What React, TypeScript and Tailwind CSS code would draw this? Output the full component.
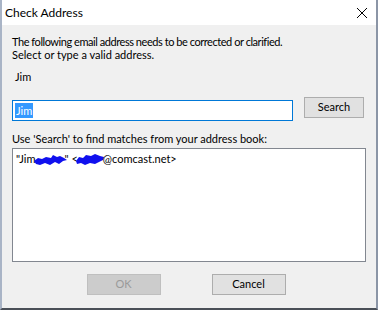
import React from 'react';

const Scribble: React.FC<{ w: number; d: string; className?: string }> = ({ w, d, className }) => (
  <svg width={w} height={14} viewBox={`0 0 ${w} 14`} className={`inline-block ${className ?? ''}`}>
    <path d={d} fill="#1010ee" />
  </svg>
);

const App: React.FC = () => {
  return (
    <div
      className="w-[378px] h-[310px] flex flex-col bg-[#f0f0f0] border-l-2 border-r-2 border-b-2 border-l-[#a9b4c6] border-r-[#8b95a6] border-b-[#4a4f57] text-[11px] text-black overflow-hidden"
      style={{ fontFamily: 'Lato, "Open Sans", sans-serif' }}
    >
      <div className="h-[25px] bg-white flex items-center justify-between pl-[3px] pr-[8px] shrink-0">
        <span className="text-[12px]">Check Address</span>
        <svg width="12" height="12" viewBox="0 0 12 12">
          <path d="M1 1 L11 11 M11 1 L1 11" stroke="#000" strokeWidth="1" />
        </svg>
      </div>

      <div className="flex flex-col pl-[10px] pr-[10px] pt-[10px]">
        <p className="leading-[13px] tracking-[-0.45px]">The following email address needs to be corrected or clarified.</p>
        <p className="leading-[13px]">Select or type a valid address.</p>
        <p className="pl-[3px] mt-[9px] leading-[13px]">Jim</p>

        <div className="flex items-start mt-[17px]">
          <div className="w-[281px] h-[21px] bg-white border border-[#0078d7] flex items-center pl-[2px]">
            <span className="bg-[#3399ff] text-white leading-[15px] px-[1px]">Jim</span>
          </div>
          <button className="ml-[11px] -mt-[3px] w-[60px] h-[21px] bg-[#e1e1e1] border border-[#adadad] flex items-center justify-center">
            Search
          </button>
        </div>

        <p className="mt-[11px] leading-[14px]">Use 'Search' to find matches from your address book:</p>

        <div className="mt-[2px] w-[354px] h-[114px] bg-white border border-[#828790] pl-[3px] pt-[2px]">
          <div className="flex items-center leading-[15px] whitespace-nowrap">
            <span>"Jim</span>
            <Scribble
              w={34}
              className="-ml-[3px] -mr-[2px]"
              d="M1 9 L5 6 L9 7 L13 5 L18 6 L20 3 L24 5 L27 4 L31 6 L34 8 L30 9 L26 12 L22 10 L17 13 L12 11 L7 13 L3 12 Z"
            />
            <span>" &lt;</span>
            <Scribble
              w={28}
              className="-ml-[2px] -mr-[1px]"
              d="M0 9 L3 5 L7 6 L10 3 L15 4 L19 2 L24 4 L28 5 L27 8 L23 10 L19 12 L14 11 L9 13 L5 11 L1 12 Z"
            />
            <span>@comcast.net&gt;</span>
          </div>
        </div>

        <div className="flex justify-center gap-[51px] mt-[12px] pr-[6px]">
          <button className="w-[74px] h-[21px] bg-[#cccccc] border border-[#bfbfbf] text-[#9a9a9a] flex items-center justify-center" disabled>
            OK
          </button>
          <button className="w-[74px] h-[21px] bg-[#e1e1e1] border border-[#adadad] flex items-center justify-center">
            Cancel
          </button>
        </div>
      </div>
    </div>
  );
};

export default App;
